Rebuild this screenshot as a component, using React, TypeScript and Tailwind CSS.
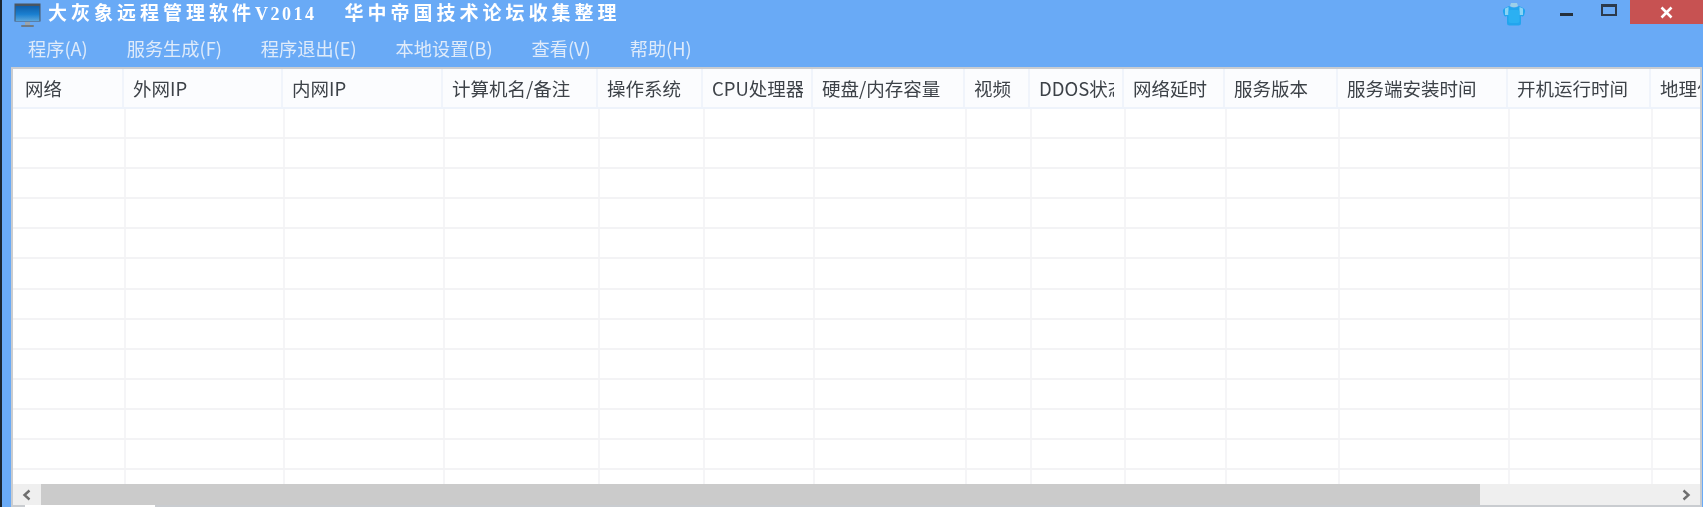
const headers = [
  "网络",
  "外网IP",
  "内网IP",
  "计算机名/备注",
  "操作系统",
  "CPU处理器",
  "硬盘/内存容量",
  "视频",
  "DDOS状态",
  "网络延时",
  "服务版本",
  "服务端安装时间",
  "开机运行时间",
  "地理位置",
];

const menus = ["程序(A)", "服务生成(F)", "程序退出(E)", "本地设置(B)", "查看(V)", "帮助(H)"];

const rows = Array.from({ length: 13 }, (_, i) => i);

function MonitorIcon() {
  return (
    <svg width="27" height="26" viewBox="0 0 27 26">
      <defs>
        <linearGradient id="screen" x1="0" y1="0" x2="0" y2="1">
          <stop offset="0" stopColor="#0f5ea8" />
          <stop offset="0.55" stopColor="#1a7fd0" />
          <stop offset="1" stopColor="#5aa6dc" />
        </linearGradient>
      </defs>
      <rect x="0.5" y="0.5" width="26" height="18" fill="#4a5560" />
      <rect x="1.5" y="3" width="24" height="15" fill="url(#screen)" />
      <rect x="11" y="19" width="5" height="3" fill="#9aa4ad" />
      <rect x="7" y="22" width="13" height="2" rx="1" fill="#6f7a84" />
    </svg>
  );
}

function ShirtIcon() {
  return (
    <svg width="24" height="24" viewBox="0 0 24 24">
      <path
        d="M7 4 Q12 7 17 4 L21 6 Q23.500 7 23 10 L22 13.500 Q21 15 19 14 L19 21 Q19 23.500 16.500 23.500 L7.500 23.500 Q5 23.500 5 21 L5 14 Q3 15 2 13.500 L1 10 Q0.500 7 3 6 Z"
        fill="#22a5ee"
      />
      <path d="M3 6.500 L6.500 5 L6.500 13 L3 13 Z M21 6.500 L17.500 5 L17.500 13 L21 13 Z" fill="#8ad4f5" />
      <path d="M9 1 L15 1 L16 4 Q12 6.500 8 4 Z" fill="#9ccfe8" />
      <rect x="6.500" y="8" width="11" height="13" rx="2" fill="#2bb0f2" />
    </svg>
  );
}

export default function App() {
  return (
    <div
      className="flex h-[507px] w-[1703px] flex-col overflow-hidden border-l-2 border-[#1a2530] bg-[#69aaf6] blur-[0.6px]"
      style={{ fontFamily: '"Noto Sans CJK SC", "Liberation Sans", sans-serif' }}
    >
      {/* Title bar */}
      <div className="flex h-[33px] shrink-0 items-start">
        <div className="ml-[12px] mt-[3px]">
          <MonitorIcon />
        </div>
        <div
          className="ml-[7px] mt-[1px] flex text-[19px] font-bold leading-[26px] tracking-[4px] whitespace-nowrap text-white"
          style={{ fontFamily: '"Liberation Serif", "Noto Sans CJK SC", serif' }}
        >
          <span>大灰象远程管理软件</span>
          <span className="text-[18px] tracking-[2.500px]">V2014</span>
          <span className="ml-[28px]">华中帝国技术论坛收集整理</span>
        </div>
        <div className="ml-auto flex items-start">
          <div className="mt-[2px]">
            <ShirtIcon />
          </div>
          <div className="ml-[34px] mt-[13px] h-[3px] w-[13px] bg-[#25303c]" />
          <div className="ml-[28px] mt-[4px] h-[12px] w-[16px] border-2 border-t-[3px] border-[#2c3a4c]" />
          <div className="ml-[13px] flex h-[24px] w-[73px] items-center justify-center bg-[#c75252]">
            <svg width="13" height="13" viewBox="0 0 13 13">
              <path d="M1.500 1.500 L11.500 11.500 M11.500 1.500 L1.500 11.500" stroke="#ffffff" strokeWidth="2.600" />
            </svg>
          </div>
        </div>
      </div>

      {/* Menu */}
      <div className="flex h-[34px] shrink-0 items-center gap-[39px] pb-[2px] pl-[26px] text-[18.200px] text-[#dfebfa]">
        {menus.map((m) => (
          <span key={m} className="whitespace-nowrap">
            {m}
          </span>
        ))}
      </div>

      {/* Table */}
      <div className="ml-[9px] mr-[1px] flex min-h-0 flex-1 flex-col overflow-hidden border-x-2 border-t-2 border-[#c9ccd0] bg-white">
        <div className="grid h-[40px] shrink-0 grid-cols-[111px_159px_160px_155px_105px_110px_152px_65px_94px_101px_113px_170px_143px_100px] overflow-hidden border-b-2 border-[#eef3fb] bg-[#fbfcfe]">
          {headers.map((h) => (
            <div
              key={h}
              className="flex items-center overflow-hidden border-r-2 border-[#f0f4fb] pl-[9px] pr-[8px] pt-[2px] text-[18.500px] whitespace-nowrap text-[#3d4248] first:pl-[12px]"
            >
              <span className="min-w-0 overflow-hidden">{h}</span>
            </div>
          ))}
        </div>
        <div className="min-h-0 flex-1 overflow-hidden">
          {rows.map((r) => (
            <div
              key={r}
              className="grid h-[30.100px] grid-cols-[113px_159px_160px_155px_105px_110px_152px_65px_94px_101px_113px_170px_143px_100px] border-b-2 border-[#f3f3f5]"
            >
              {headers.map((h) => (
                <div key={h} className="border-r-2 border-[#f5f5f7]" />
              ))}
            </div>
          ))}
        </div>
        {/* Horizontal scrollbar */}
        <div className="flex h-[21px] shrink-0 items-stretch bg-[#efefef]">
          <div className="flex w-[28px] items-center justify-center">
            <svg width="12" height="12" viewBox="0 0 12 12">
              <path d="M8.500 1.500 L3.500 6 L8.500 10.500" fill="none" stroke="#6e6e6e" strokeWidth="2.400" />
            </svg>
          </div>
          <div className="w-[1439px] bg-[#cbcbcb]" />
          <div className="flex flex-1 items-center justify-end pr-[8px]">
            <svg width="12" height="12" viewBox="0 0 12 12">
              <path d="M3.500 1.500 L8.500 6 L3.500 10.500" fill="none" stroke="#6e6e6e" strokeWidth="2.400" />
            </svg>
          </div>
        </div>
        {/* Bottom edge */}
        <div className="flex h-[2px] shrink-0 bg-[#c9ccd0]">
          <div className="ml-[12px] w-[130px] bg-white" />
        </div>
      </div>
    </div>
  );
}
